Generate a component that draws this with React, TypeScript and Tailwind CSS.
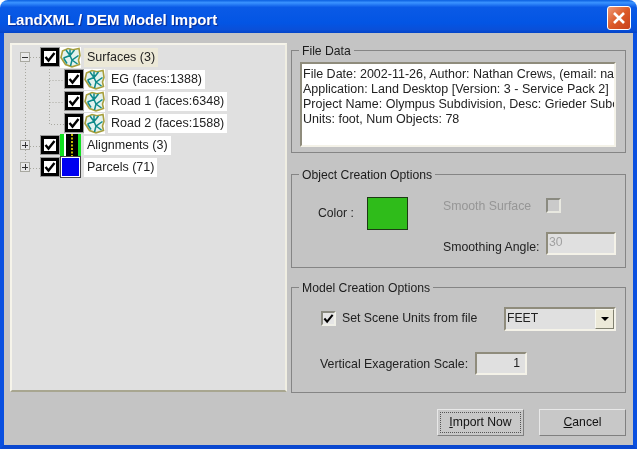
const font = "font-['Liberation_Sans',Arial,sans-serif]";

function Check() {
  return (
    <svg viewBox="0 0 12 12" className="w-[12px] h-[12px]">
      <path d="M1.5 6 L4.5 9.5 L10.5 2" fill="none" stroke="#000" strokeWidth="2.4" />
    </svg>
  );
}

function TreeCheck() {
  return (
    <div className="w-[18px] h-[18px] shrink-0 border-[3px] border-black bg-white flex items-center justify-center outline outline-1 outline-[#9a9a9a]">
      <Check />
    </div>
  );
}

function SurfaceIcon() {
  return (
    <svg viewBox="0 0 21 21" className="w-[21px] h-[21px] shrink-0 bg-white">
      <path d="M2.5 4 L8 1.5 L13 2.8 L19 1.5 L20 8.5 L18.5 13 L19.5 17.5 L12 19.8 L5.5 17.5 L1 10.5 Z" fill="#e4f2ee" stroke="#a89f3c" strokeWidth="1.6" />
      <path d="M3.5 11 L10 8.5 L14.5 3 M10 8.5 L6 3 M10 8.5 L12 13 L18.5 8.5 M12 13 L10.5 19 M12 13 L17.5 17 M3.5 11 L7 16.5 M10 8.5 L10 2.5" fill="none" stroke="#0f8a8a" strokeWidth="1.5" />
    </svg>
  );
}

function AlignIcon() {
  return (
    <svg viewBox="0 0 21 22" className="w-[21px] h-[22px] shrink-0 bg-white">
      <rect x="0" y="0" width="4" height="22" fill="#10e020" />
      <rect x="6" y="0" width="12" height="22" fill="#000" />
      <rect x="18" y="0" width="3" height="22" fill="#10e020" />
      <path d="M12 0 V22" stroke="#f4e800" strokeWidth="1.6" strokeDasharray="2 1.5" />
    </svg>
  );
}

function BlueIcon() {
  return (
    <div className="w-[21px] h-[22px] shrink-0 bg-white border border-[#444] p-[1px]">
      <div className="w-full h-full bg-[#0000f0]" />
    </div>
  );
}

function Expander({ sign }: { sign: "+" | "-" }) {
  return (
    <div className="w-[10px] h-[10px] shrink-0 border border-[#a8a8a0] bg-[#e8e8e8] flex items-center justify-center relative">
      <div className="w-[6px] h-[1px] bg-[#333]" />
      {sign === "+" && <div className="absolute w-[1px] h-[6px] bg-[#333]" />}
    </div>
  );
}

function Row({ indent, expander, icon, label, selected }: { indent: string; expander?: "+" | "-"; icon: React.ReactNode; label: string; selected?: boolean }) {
  return (
    <div className={`h-[22px] flex items-center ${indent}`}>
      {expander && (
        <>
          <Expander sign={expander} />
          <div className="w-[11px]" />
        </>
      )}
      <TreeCheck />
      <div className="ml-[1px]">{icon}</div>
      <div className={`ml-[3px] h-[19px] px-[3px] flex items-center text-[12.5px] text-[#222] whitespace-nowrap ${selected ? "bg-[#ece9d8]" : "bg-white"}`}>{label}</div>
    </div>
  );
}

function Group({ title, className, children }: { title: string; className: string; children: React.ReactNode }) {
  return (
    <fieldset className={`border border-[#858585] ${className}`}>
      <legend className="ml-[7px] px-[3px] text-[12.2px] leading-[14px] text-[#1c1c1c]">
        <span className="relative top-[1px]">{title}</span>
      </legend>
      {children}
    </fieldset>
  );
}

function Inset({ className, children }: { className: string; children?: React.ReactNode }) {
  return (
    <div className={`border-2 border-t-[#8f8c7c] border-l-[#8f8c7c] border-r-[#f4f2e8] border-b-[#f4f2e8] ${className}`}>{children}</div>
  );
}

function WinButton({ className, children }: { className?: string; children: React.ReactNode }) {
  return (
    <div className={`w-[87px] h-[27px] flex items-center justify-center bg-[#c8c8c8] border border-t-[#e8e8e8] border-l-[#e8e8e8] border-r-[#808080] border-b-[#808080] text-[12.2px] text-[#111] ${className ?? ""}`}>
      {children}
    </div>
  );
}

export default function App() {
  return (
    <div className={`w-[637px] h-[449px] flex flex-col overflow-hidden bg-white blur-[0.35px] ${font}`}>
      <div className="h-[33px] shrink-0 rounded-t-[8px] flex items-center justify-between pl-[7px] pr-[6px] bg-[linear-gradient(180deg,#0a5fe0_0%,#3a93ff_8%,#0a5ae6_22%,#0355e4_70%,#0a4fd8_90%,#0344c8_100%)]">
        <div className="mt-[7px] text-[15px] font-bold text-white tracking-[-0.05px] [text-shadow:1px_1px_1px_#0a2a90]">LandXML / DEM Model Import</div>
        <div className="w-[24px] h-[24px] mt-[3px] rounded-[3px] border border-white bg-[linear-gradient(135deg,#ee9a78,#dc5a28_50%,#c8401c)] flex items-center justify-center">
          <svg viewBox="0 0 14 14" className="w-[14px] h-[14px]">
            <path d="M2 2 L12 12 M12 2 L2 12" stroke="#fff" strokeWidth="2.6" />
          </svg>
        </div>
      </div>

      <div className="flex-1 min-h-0 border-x-[4px] border-b-[4px] border-x-[#0a50e0] border-b-[#0a48d0] bg-[#c4c4c4] flex pt-[10px] pl-[6px]">
        <div className="relative w-[277px] h-[349px] shrink-0 bg-[#e0e0e0] border-2 border-t-[#f6f4ea] border-l-[#f6f4ea] border-r-[#f0eee2] border-b-[#a8a690] pt-[1px] pl-[8px]">
          <svg className="absolute left-0 top-0 w-[100px] h-[140px]" viewBox="0 0 100 140">
            <g fill="none" stroke="#a8a8a0" strokeWidth="1" strokeDasharray="1 2">
              <path d="M13.5 18 V124" />
              <path d="M37.5 24 V79.5 H52" />
              <path d="M37.5 35.5 H52 M37.5 57.5 H52" />
              <path d="M18 12.5 H28 M18 101.5 H28 M18 123.5 H28" />
            </g>
          </svg>
          <div className="relative">
            <Row indent="" expander="-" icon={<SurfaceIcon />} label="Surfaces (3)" selected />
            <Row indent="pl-[45px]" icon={<SurfaceIcon />} label="EG (faces:1388)" />
            <Row indent="pl-[45px]" icon={<SurfaceIcon />} label="Road 1 (faces:6348)" />
            <Row indent="pl-[45px]" icon={<SurfaceIcon />} label="Road 2 (faces:1588)" />
            <Row indent="" expander="+" icon={<AlignIcon />} label="Alignments (3)" />
            <Row indent="" expander="+" icon={<BlueIcon />} label="Parcels (71)" />
          </div>
        </div>

        <div className="ml-[4px] w-[335px] shrink-0 flex flex-col">
          <Group title="File Data" className="h-[110px]">
            <Inset className="mt-[5px] ml-[8px] w-[316px] h-[85px] bg-white overflow-hidden pl-[1px] pt-[3px]">
              <div className="text-[12.5px] leading-[15px] text-[#222] whitespace-nowrap w-[310px]">
                <div>File Date: 2002-11-26, Author: Nathan Crews, (email: na</div>
                <div>Application: Land Desktop [Version: 3 - Service Pack 2]</div>
                <div>Project Name: Olympus Subdivision, Desc: Grieder Subc</div>
                <div>Units: foot, Num Objects: 78</div>
              </div>
            </Inset>
          </Group>

          <Group title="Object Creation Options" className="h-[101px] mt-[14px]">
            <div className="flex items-start">
              <div className="ml-[26px] mt-[16px] flex items-center">
                <div className="w-[49px] text-[12.2px] text-[#222]">Color :</div>
                <div className="w-[41px] h-[33px] bg-[#2fbc1a] border border-[#1c3a14]" />
              </div>
              <div className="ml-[35px] mt-[17px] flex flex-col">
                <div className="flex items-center h-[15px]">
                  <div className="w-[103px] pt-[2px] text-[12.3px] text-[#969696]">Smooth Surface</div>
                  <div className="w-[15px] h-[15px] border-2 border-t-[#8a8a80] border-l-[#8a8a80] border-r-[#e8e8e0] border-b-[#e8e8e0] bg-[#cacaca]" />
                </div>
                <div className="flex items-center mt-[18px]">
                  <div className="w-[103px] text-[12.3px] text-[#222] pt-[7px]">Smoothing Angle:</div>
                  <Inset className="w-[70px] h-[23px] bg-[#e0e0e0] pl-[1px] pt-[1px] text-[12.2px] leading-[15px] text-[#a0a0a0]">30</Inset>
                </div>
              </div>
            </div>
          </Group>

          <Group title="Model Creation Options" className="h-[113px] mt-[12px]">
            <div className="flex items-center mt-[13px] ml-[29px] h-[23px]">
              <div className="w-[15px] h-[15px] border-2 border-t-[#8a8a80] border-l-[#8a8a80] border-r-[#f0f0e8] border-b-[#f0f0e8] bg-[#e6e6e6] flex items-center justify-center">
                <svg viewBox="0 0 12 12" className="w-[11px] h-[11px]">
                  <path d="M1.5 6 L4.5 9.5 L10.5 2" fill="none" stroke="#000" strokeWidth="2.2" />
                </svg>
              </div>
              <div className="ml-[6px] w-[162px] text-[12.3px] text-[#222]">Set Scene Units from file</div>
              <Inset className="w-[112px] h-[24px] bg-[#e0e0e0] flex items-stretch">
                <div className="flex-1 text-[12.2px] leading-[18px] pl-[1px] text-[#222]">FEET</div>
                <div className="w-[19px] bg-[#ece9d8] border border-t-[#f8f8f0] border-l-[#f8f8f0] border-r-[#808070] border-b-[#808070] flex items-center justify-center">
                  <div className="w-0 h-0 border-x-[4px] border-t-[4px] border-x-transparent border-t-black" />
                </div>
              </Inset>
            </div>
            <div className="flex items-center mt-[22px] ml-[28px]">
              <div className="w-[155px] text-[12.4px] text-[#222] pt-[2px]">Vertical Exageration Scale:</div>
              <Inset className="w-[52px] h-[23px] bg-[#e0e0e0] text-right pr-[5px] text-[12.2px] leading-[19px] text-[#222]">1</Inset>
            </div>
          </Group>

          <div className="mt-[16px] flex justify-end gap-[15px]">
            <WinButton className="outline-1 outline-dotted outline-[#555] -outline-offset-4">
              <span><span className="underline">I</span>mport Now</span>
            </WinButton>
            <WinButton>
              <span><span className="underline">C</span>ancel</span>
            </WinButton>
          </div>
        </div>
      </div>
    </div>
  );
}
